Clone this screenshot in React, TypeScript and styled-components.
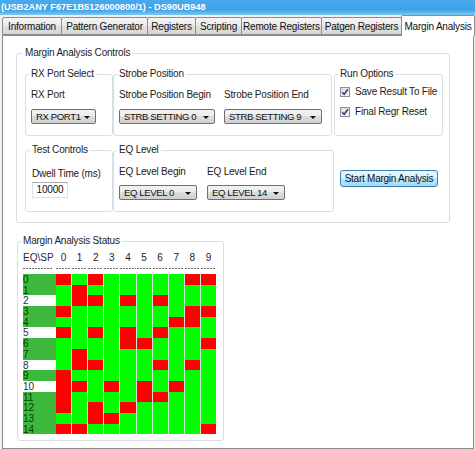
import React from 'react';
import styled, { createGlobalStyle } from 'styled-components';

const GlobalStyle = createGlobalStyle`
  html, body { margin: 0; padding: 0; background: #f0f0f0; }
  body { font-family: "Liberation Sans", Arial, sans-serif; }
`;

const Window = styled.div`
  width: 475px;
  height: 449px;
  overflow: hidden;
  background: #f0f0f0;
  display: flex;
  flex-direction: column;
  font-family: "Liberation Sans", Arial, sans-serif;
  font-size: 10px;
  letter-spacing: -0.2px;
  color: #1b1b1b;
`;

const TitleBar = styled.div`
  flex: none;
  height: 15px;
  line-height: 15px;
  padding-left: 1px;
  background: linear-gradient(to bottom, #49aaee 0%, #3ea2e8 65%, #7fc6f1 100%);
  color: #ffffff;
  font-weight: bold;
  font-size: 9.2px;
  letter-spacing: 0;
  white-space: nowrap;
`;

const TabStrip = styled.div`
  flex: none;
  height: 20px;
  display: flex;
  align-items: flex-end;
  padding-left: 2px;
`;

const Tab = styled.div<{ $w: number; $active?: boolean }>`
  flex: none;
  box-sizing: border-box;
  width: ${p => p.$w + 1}px;
  height: ${p => (p.$active ? 21 : 18)}px;
  margin-right: -1px;
  margin-bottom: ${p => (p.$active ? -1 : 0)}px;
  display: flex;
  align-items: center;
  justify-content: center;
  border: 1px solid #898c95;
  border-bottom: ${p => (p.$active ? 'none' : '1px solid #898c95')};
  border-radius: 2px 2px 0 0;
  background: ${p =>
    p.$active ? '#ffffff' : 'linear-gradient(to bottom, #f4f4f4 0%, #ececec 50%, #e0e0e0 50%, #d8d8d8 100%)'};
  color: #111;
  white-space: nowrap;
  position: relative;
  z-index: ${p => (p.$active ? 2 : 1)};
`;

const Panel = styled.div`
  flex: 1;
  margin: 0 1px 0 2px;
  border: 1px solid #898c95;
  background: #ffffff;
  padding: 11px 0 0 13px;
  display: flex;
  flex-direction: column;
  align-items: flex-start;
`;

const Group = styled.fieldset<{ $w: number; $pad: string }>`
  margin: 0;
  min-width: 0;
  box-sizing: border-box;
  width: ${p => p.$w}px;
  border: 1px solid #d5dfe5;
  border-radius: 3px;
  padding: ${p => p.$pad};
`;

const Legend = styled.legend`
  padding: 0 2px;
  margin-left: -2px;
  line-height: 12px;
  font-size: 10px;
  color: #222;
  white-space: nowrap;
`;

const ControlsGroup = styled(Group)`
  display: flex;
  flex-direction: column;
  gap: 8px;
`;

const GroupRow = styled.div`
  display: flex;
  align-items: stretch;
`;

const SubGroup = styled(Group)<{ $after?: number }>`
  margin-right: ${p => p.$after ?? 0}px;
  display: flex;
`;

const FieldRow = styled.div<{ $gap: number }>`
  display: flex;
  gap: ${p => p.$gap}px;
`;

const Field = styled.div<{ $gap: number }>`
  display: flex;
  flex-direction: column;
  align-items: flex-start;
  gap: ${p => p.$gap}px;
`;

const Label = styled.div`
  line-height: 12px;
  white-space: nowrap;
`;

const Combo = styled.div<{ $w: number }>`
  box-sizing: border-box;
  width: ${p => p.$w}px;
  height: 15px;
  display: flex;
  align-items: center;
  justify-content: space-between;
  padding: 0 5px 0 4px;
  border: 1px solid #707070;
  border-radius: 2px;
  background: linear-gradient(to bottom, #f2f2f2 0%, #ebebeb 50%, #dddddd 50%, #cfcfcf 100%);
  color: #111;
  font-size: 9.6px;
  letter-spacing: -0.4px;
  white-space: nowrap;
`;

const Arrow = styled.span`
  flex: none;
  width: 0;
  height: 0;
  border-left: 3px solid transparent;
  border-right: 3px solid transparent;
  border-top: 3px solid #111;
  margin-top: 1px;
`;

const TextBox = styled.div`
  box-sizing: border-box;
  width: 36px;
  height: 16px;
  line-height: 14px;
  text-align: center;
  border: 1px solid #dbdfe6;
  border-top-color: #abadb3;
  background: #ffffff;
  color: #111;
`;

const Options = styled.div`
  display: flex;
  flex-direction: column;
  gap: 9px;
`;

const CheckRow = styled.label`
  display: flex;
  align-items: center;
  gap: 5px;
  line-height: 11px;
  white-space: nowrap;
`;

const CheckBox = styled.span`
  flex: none;
  box-sizing: border-box;
  width: 10px;
  height: 10px;
  border: 1px solid #8e8f8f;
  background: linear-gradient(135deg, #dcdcdc 0%, #f6f6f6 100%);
  display: flex;
  align-items: center;
  justify-content: center;
`;

const Button = styled.button`
  align-self: center;
  margin-left: 6px;
  box-sizing: border-box;
  width: 98px;
  height: 17px;
  padding: 0;
  border: 1px solid #3c7fb1;
  border-radius: 3px;
  background: linear-gradient(to bottom, #eaf6fd 0%, #d9f0fc 50%, #bee6fd 50%, #a7d9f5 100%);
  font-family: inherit;
  font-size: 10px;
  letter-spacing: -0.25px;
  color: #111;
  white-space: nowrap;
`;

const StatusGroup = styled(Group)`
  margin: 12px 0 0 1px;
`;

const StatusTable = styled.div`
  display: flex;
  flex-direction: column;
`;

const Line = styled.div`
  display: flex;
`;

const RowLabel = styled.div<{ $tone?: 'green' | 'white' | 'none' }>`
  flex: none;
  width: 33px;
  height: 100%;
  font-size: 10px;
  letter-spacing: 0;
  line-height: 11px;
  background: ${p => (p.$tone === 'green' ? '#3cb83c' : p.$tone === 'white' ? '#ffffff' : 'transparent')};
  color: ${p => (p.$tone === 'green' ? '#003f00' : '#2a2a3a')};
  overflow: hidden;
  white-space: nowrap;
`;

const HeaderCells = styled.div`
  flex: 1;
  display: grid;
  grid-template-columns: repeat(10, 1fr);
  column-gap: 1px;
`;

const HeaderNum = styled.div`
  text-align: center;
  line-height: 12px;
  letter-spacing: 0;
`;

const DashLine = styled.div`
  display: flex;
  margin: 4px 0 5px 0;
  height: 1px;
`;

const Dashes = styled.div<{ $w?: number }>`
  ${p => (p.$w ? `width: ${p.$w}px; flex: none; margin-right: ${33 - p.$w}px;` : '')}
  height: 1px;
  background: repeating-linear-gradient(to right, #6a6a6a 0 2px, transparent 2px 3px);
`;

const GridRow = styled.div`
  display: flex;
  height: 10.7px;
`;

const Cells = styled.div`
  flex: 1;
  display: grid;
  grid-template-columns: repeat(10, 1fr);
  column-gap: 1px;
  background: #cfe6cf;
`;

const Cell = styled.div<{ $pass: boolean }>`
  background: ${p => (p.$pass ? '#00ff00' : '#ff0000')};
`;

const RESULTS = [
  'RGRGGGGGRR',
  'GRGGGGGGGG',
  'GRRGRGRGGG',
  'RGGGGGGGRR',
  'GGGGGGGRRG',
  'RGRGRGRGGG',
  'GGGGRRGGGR',
  'GRGGGGGGGG',
  'GRRGGGRGRG',
  'RGGGGGGGGG',
  'RRGRGRGRGG',
  'RGGGGRRGGG',
  'RGRGRGGGGG',
  'GGRRGGGGGG',
  'RRGGGGGGGR',
];

const WHITE_ROWS = [2, 5, 8, 10];

const TABS: { name: string; w: number; active?: boolean }[] = [
  { name: 'Information', w: 59 },
  { name: 'Pattern Generator', w: 86 },
  { name: 'Registers', w: 48 },
  { name: 'Scripting', w: 46 },
  { name: 'Remote Registers', w: 80 },
  { name: 'Patgen Registers', w: 80 },
  { name: 'Margin Analysis', w: 73, active: true },
];

const CheckMark = () => (
  <svg width="8" height="8" viewBox="0 0 8 8">
    <path d="M1.2 4.2 L3.2 6.3 L6.9 1.3" fill="none" stroke="#2b3f73" strokeWidth="1.5" />
  </svg>
);

const Select = ({ w, value }: { w: number; value: string }) => (
  <Combo $w={w}>
    <span>{value}</span>
    <Arrow />
  </Combo>
);

export default function App() {
  const cols = Array.from({ length: 10 }, (_, i) => i);
  return (
    <>
      <GlobalStyle />
      <Window>
        <TitleBar>(USB2ANY F67E1B5126000800/1) - DS90UB948</TitleBar>
        <TabStrip>
          {TABS.map(t => (
            <Tab key={t.name} $w={t.w} $active={t.active}>
              {t.name}
            </Tab>
          ))}
        </TabStrip>
        <Panel>
          <ControlsGroup $w={434} $pad="9px 0 10px 8px">
            <Legend>Margin Analysis Controls</Legend>
            <GroupRow>
              <SubGroup $w={88} $pad="9px 5px 11px 5px">
                <Legend>RX Port Select</Legend>
                <Field $gap={8}>
                  <Label>RX Port</Label>
                  <Select w={65} value="RX PORT1" />
                </Field>
              </SubGroup>
              <SubGroup $w={219} $pad="9px 5px 11px 5px" $after={2}>
                <Legend>Strobe Position</Legend>
                <FieldRow $gap={9}>
                  <Field $gap={8}>
                    <Label>Strobe Position Begin</Label>
                    <Select w={96} value="STRB SETTING 0" />
                  </Field>
                  <Field $gap={8}>
                    <Label>Strobe Position End</Label>
                    <Select w={98} value="STRB SETTING 9" />
                  </Field>
                </FieldRow>
              </SubGroup>
              <SubGroup $w={109} $pad="6px 5px 8px 5px">
                <Legend>Run Options</Legend>
                <Options>
                  <CheckRow>
                    <CheckBox>
                      <CheckMark />
                    </CheckBox>
                    Save Result To File
                  </CheckRow>
                  <CheckRow>
                    <CheckBox>
                      <CheckMark />
                    </CheckBox>
                    Final Regr Reset
                  </CheckRow>
                </Options>
              </SubGroup>
            </GroupRow>
            <GroupRow>
              <SubGroup $w={88} $pad="12px 5px 13px 6px">
                <Legend>Test Controls</Legend>
                <Field $gap={2}>
                  <Label>Dwell Time (ms)</Label>
                  <TextBox>10000</TextBox>
                </Field>
              </SubGroup>
              <SubGroup $w={221} $pad="10px 5px 11px 5px">
                <Legend>EQ Level</Legend>
                <FieldRow $gap={10}>
                  <Field $gap={7}>
                    <Label>EQ Level Begin</Label>
                    <Select w={78} value="EQ LEVEL 0" />
                  </Field>
                  <Field $gap={7}>
                    <Label>EQ Level End</Label>
                    <Select w={78} value="EQ LEVEL 14" />
                  </Field>
                </FieldRow>
              </SubGroup>
              <Button>Start Margin Analysis</Button>
            </GroupRow>
          </ControlsGroup>

          <StatusGroup $w={207} $pad="5px 7px 6px 5px">
            <Legend>Margin Analysis Status</Legend>
            <StatusTable>
              <Line>
                <RowLabel $tone="none">
                  <Label>EQ\SP</Label>
                </RowLabel>
                <HeaderCells>
                  {cols.map(c => (
                    <HeaderNum key={c}>{c}</HeaderNum>
                  ))}
                </HeaderCells>
              </Line>
              <DashLine>
                <Dashes $w={29} />
                <HeaderCells>
                  {cols.map(c => (
                    <Dashes key={c} />
                  ))}
                </HeaderCells>
              </DashLine>
              {RESULTS.map((row, r) => (
                <GridRow key={r}>
                  <RowLabel $tone={WHITE_ROWS.includes(r) ? 'white' : 'green'}>{r}</RowLabel>
                  <Cells>
                    {row.split('').map((v, c) => (
                      <Cell key={c} $pass={v === 'G'} />
                    ))}
                  </Cells>
                </GridRow>
              ))}
            </StatusTable>
          </StatusGroup>
        </Panel>
      </Window>
    </>
  );
}
